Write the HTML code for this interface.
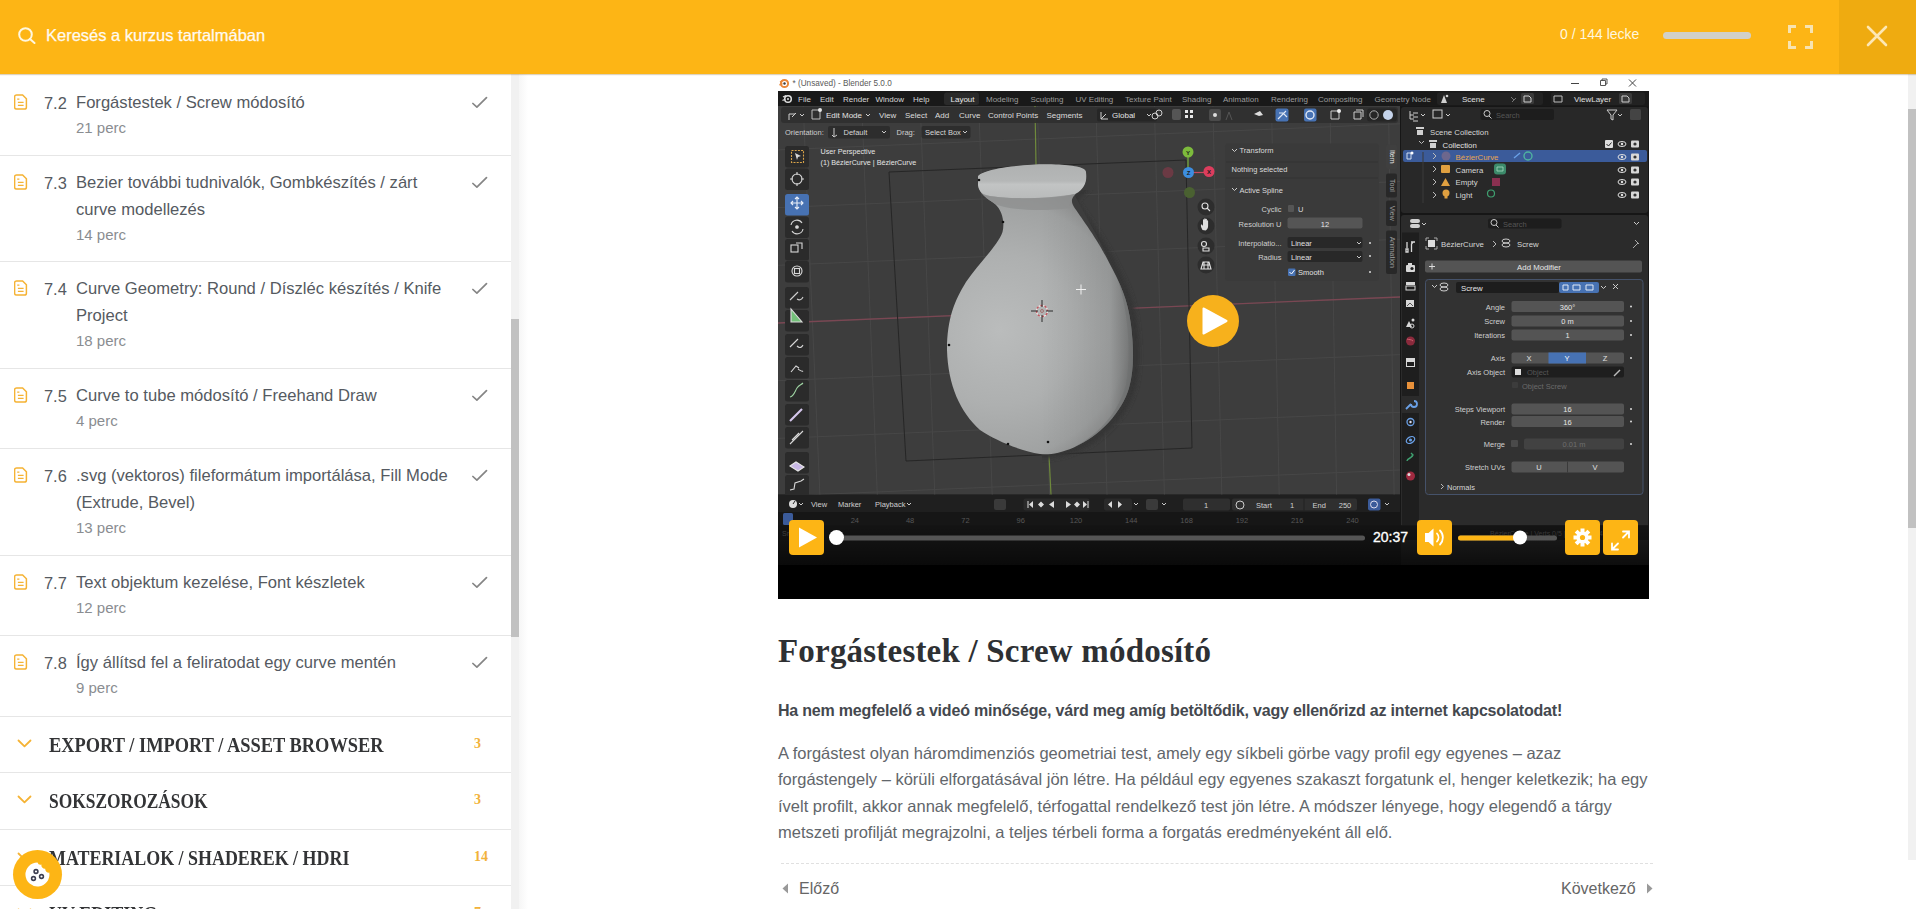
<!DOCTYPE html>
<html><head><meta charset="utf-8">
<style>
*{box-sizing:border-box;margin:0;padding:0}
html,body{width:1916px;height:909px;overflow:hidden;background:#fff;font-family:"Liberation Sans",sans-serif}
#top{position:absolute;z-index:10;left:0;top:0;width:1916px;height:74px;background:#fdb515;box-shadow:0 1px 1px rgba(120,80,0,0.25)}
#top .q{position:absolute;left:46px;top:26px;font-size:16.5px;color:#fffaf0;-webkit-text-stroke:0.25px #fffaf0}
#top .cnt{position:absolute;left:1560px;top:26px;font-size:14px;color:#fff7df}
#top .bar{position:absolute;left:1663px;top:32px;width:88px;height:7px;border-radius:4px;background:#d2d0c8}
#top .close{position:absolute;left:1839px;top:0;width:77px;height:74px;background:#efab10}
#side{position:absolute;left:0;top:0;width:511px;height:909px;background:#fff}
#sbar{position:absolute;left:511px;top:74px;width:8px;height:835px;background:#f1f1f1}
#sthumb{position:absolute;left:511px;top:319px;width:8px;height:318px;background:#c1c1c1}
#pbar{position:absolute;left:1908px;top:74px;width:8px;height:786px;background:#f1f1f1}
#pthumb{position:absolute;left:1908px;top:109px;width:8px;height:419px;background:#c1c1c1}
.item{position:absolute;left:0;width:511px;border-bottom:1px solid #e6e6e6}
.item .ic{position:absolute;left:14px;top:18px}
.item .num{position:absolute;left:44px;top:14px;font-size:16.4px;line-height:26.5px;color:#555a61}
.item .tt{position:absolute;left:76px;top:14px;width:400px;font-size:16.6px;line-height:26.5px;color:#555a61}
.item .dur{position:absolute;left:76px;font-size:15px;color:#8a8d91}
.item .ck{position:absolute;left:471px;top:20px}
.sec{position:absolute;left:0;width:511px;border-bottom:1px solid #e6e6e6}
.sec .ch{position:absolute;left:17px;top:22px}
.sec .st{position:absolute;left:49px;top:17px;font-family:"Liberation Serif",serif;font-weight:bold;font-size:20px;color:#333436;transform:scaleX(0.968);transform-origin:0 0;white-space:nowrap}
.sec .n{position:absolute;left:474px;top:19px;font-family:"Liberation Serif",serif;font-weight:bold;font-size:14px;color:#f2b23a}
#main h1{position:absolute;left:778px;top:633px;font-family:"Liberation Serif",serif;font-weight:bold;font-size:33px;letter-spacing:0.2px;color:#2e3033;white-space:nowrap}
#main .b{position:absolute;left:778px;top:701.5px;font-size:16px;font-weight:bold;letter-spacing:-0.2px;color:#44484e;white-space:nowrap}
#main .p{position:absolute;left:778px;top:740px;width:880px;font-size:16.5px;line-height:26.4px;color:#62666b}
#main .sep{position:absolute;left:781px;top:863px;width:872px;border-top:1px dashed #e0e0e0}
#main .prev{position:absolute;left:799px;top:880px;font-size:16px;color:#666}
#main .next{position:absolute;left:1561px;top:880px;font-size:16px;color:#666}
#video{position:absolute;left:778px;top:74px;width:871px;height:525px;background:#000;overflow:hidden}
#cookie{position:absolute;left:13px;top:850px;width:49px;height:49px;border-radius:50%;background:#fdb515}
</style></head><body>
<div id="top">
  <svg style="position:absolute;left:18px;top:27px" width="18" height="17" viewBox="0 0 18 17"><circle cx="7.5" cy="7.5" r="6.3" fill="none" stroke="#fff7df" stroke-width="2"/><line x1="12" y1="12" x2="16.5" y2="16" stroke="#fff7df" stroke-width="2" stroke-linecap="round"/></svg>
  <div class="q">Keresés a kurzus tartalmában</div>
  <div class="cnt">0 / 144 lecke</div>
  <div class="bar"></div>
  <svg style="position:absolute;left:1788px;top:25px" width="25" height="24" viewBox="0 0 25 24" fill="none" stroke="#f7e3b0" stroke-width="3"><path d="M1.5 8V1.5H8M17 1.5H23.5V8M23.5 16V22.5H17M8 22.5H1.5V16"/></svg>
  <div class="close"><svg style="position:absolute;left:27px;top:25px" width="22" height="22" viewBox="0 0 22 22" stroke="#fde7b4" stroke-width="2.6" stroke-linecap="round"><path d="M2 2L20 20M20 2L2 20"/></svg></div>
</div>
<div id="side">
<div class="item" style="top:76px;height:80px"><svg class="ic" width="14" height="16" viewBox="0 0 14 16" fill="none" stroke="#f5b335" stroke-width="1.5"><path d="M2.5 0.9H8.6L12.4 4.7V13.2A1.9 1.9 0 0 1 10.5 15.1H2.5A1.9 1.9 0 0 1 0.6 13.2V2.8A1.9 1.9 0 0 1 2.5 0.9Z"/><path d="M3.2 5.2H5.4M3.9 8.3H9.6M3.9 11.3H9.6" stroke-width="1.3"/></svg><div class="num">7.2</div><div class="tt">Forgástestek / Screw módosító</div><div class="dur" style="top:43.0px">21 perc</div><svg class="ck" width="18" height="14" viewBox="0 0 18 14" fill="none" stroke="#858585" stroke-width="1.7" stroke-linecap="round" stroke-linejoin="round"><path d="M1.9 7.5L5.9 11.2L15.5 1.6"/></svg></div>
<div class="item" style="top:156px;height:106px"><svg class="ic" width="14" height="16" viewBox="0 0 14 16" fill="none" stroke="#f5b335" stroke-width="1.5"><path d="M2.5 0.9H8.6L12.4 4.7V13.2A1.9 1.9 0 0 1 10.5 15.1H2.5A1.9 1.9 0 0 1 0.6 13.2V2.8A1.9 1.9 0 0 1 2.5 0.9Z"/><path d="M3.2 5.2H5.4M3.9 8.3H9.6M3.9 11.3H9.6" stroke-width="1.3"/></svg><div class="num">7.3</div><div class="tt">Bezier további tudnivalók, Gombkészítés / zárt<br>curve modellezés</div><div class="dur" style="top:69.5px">14 perc</div><svg class="ck" width="18" height="14" viewBox="0 0 18 14" fill="none" stroke="#858585" stroke-width="1.7" stroke-linecap="round" stroke-linejoin="round"><path d="M1.9 7.5L5.9 11.2L15.5 1.6"/></svg></div>
<div class="item" style="top:262px;height:107px"><svg class="ic" width="14" height="16" viewBox="0 0 14 16" fill="none" stroke="#f5b335" stroke-width="1.5"><path d="M2.5 0.9H8.6L12.4 4.7V13.2A1.9 1.9 0 0 1 10.5 15.1H2.5A1.9 1.9 0 0 1 0.6 13.2V2.8A1.9 1.9 0 0 1 2.5 0.9Z"/><path d="M3.2 5.2H5.4M3.9 8.3H9.6M3.9 11.3H9.6" stroke-width="1.3"/></svg><div class="num">7.4</div><div class="tt">Curve Geometry: Round / Díszléc készítés / Knife<br>Project</div><div class="dur" style="top:69.5px">18 perc</div><svg class="ck" width="18" height="14" viewBox="0 0 18 14" fill="none" stroke="#858585" stroke-width="1.7" stroke-linecap="round" stroke-linejoin="round"><path d="M1.9 7.5L5.9 11.2L15.5 1.6"/></svg></div>
<div class="item" style="top:369px;height:80px"><svg class="ic" width="14" height="16" viewBox="0 0 14 16" fill="none" stroke="#f5b335" stroke-width="1.5"><path d="M2.5 0.9H8.6L12.4 4.7V13.2A1.9 1.9 0 0 1 10.5 15.1H2.5A1.9 1.9 0 0 1 0.6 13.2V2.8A1.9 1.9 0 0 1 2.5 0.9Z"/><path d="M3.2 5.2H5.4M3.9 8.3H9.6M3.9 11.3H9.6" stroke-width="1.3"/></svg><div class="num">7.5</div><div class="tt">Curve to tube módosító / Freehand Draw</div><div class="dur" style="top:43.0px">4 perc</div><svg class="ck" width="18" height="14" viewBox="0 0 18 14" fill="none" stroke="#858585" stroke-width="1.7" stroke-linecap="round" stroke-linejoin="round"><path d="M1.9 7.5L5.9 11.2L15.5 1.6"/></svg></div>
<div class="item" style="top:449px;height:107px"><svg class="ic" width="14" height="16" viewBox="0 0 14 16" fill="none" stroke="#f5b335" stroke-width="1.5"><path d="M2.5 0.9H8.6L12.4 4.7V13.2A1.9 1.9 0 0 1 10.5 15.1H2.5A1.9 1.9 0 0 1 0.6 13.2V2.8A1.9 1.9 0 0 1 2.5 0.9Z"/><path d="M3.2 5.2H5.4M3.9 8.3H9.6M3.9 11.3H9.6" stroke-width="1.3"/></svg><div class="num">7.6</div><div class="tt">.svg (vektoros) fileformátum importálása, Fill Mode<br>(Extrude, Bevel)</div><div class="dur" style="top:69.5px">13 perc</div><svg class="ck" width="18" height="14" viewBox="0 0 18 14" fill="none" stroke="#858585" stroke-width="1.7" stroke-linecap="round" stroke-linejoin="round"><path d="M1.9 7.5L5.9 11.2L15.5 1.6"/></svg></div>
<div class="item" style="top:556px;height:80px"><svg class="ic" width="14" height="16" viewBox="0 0 14 16" fill="none" stroke="#f5b335" stroke-width="1.5"><path d="M2.5 0.9H8.6L12.4 4.7V13.2A1.9 1.9 0 0 1 10.5 15.1H2.5A1.9 1.9 0 0 1 0.6 13.2V2.8A1.9 1.9 0 0 1 2.5 0.9Z"/><path d="M3.2 5.2H5.4M3.9 8.3H9.6M3.9 11.3H9.6" stroke-width="1.3"/></svg><div class="num">7.7</div><div class="tt">Text objektum kezelése, Font készletek</div><div class="dur" style="top:43.0px">12 perc</div><svg class="ck" width="18" height="14" viewBox="0 0 18 14" fill="none" stroke="#858585" stroke-width="1.7" stroke-linecap="round" stroke-linejoin="round"><path d="M1.9 7.5L5.9 11.2L15.5 1.6"/></svg></div>
<div class="item" style="top:636px;height:81px"><svg class="ic" width="14" height="16" viewBox="0 0 14 16" fill="none" stroke="#f5b335" stroke-width="1.5"><path d="M2.5 0.9H8.6L12.4 4.7V13.2A1.9 1.9 0 0 1 10.5 15.1H2.5A1.9 1.9 0 0 1 0.6 13.2V2.8A1.9 1.9 0 0 1 2.5 0.9Z"/><path d="M3.2 5.2H5.4M3.9 8.3H9.6M3.9 11.3H9.6" stroke-width="1.3"/></svg><div class="num">7.8</div><div class="tt">Így állítsd fel a feliratodat egy curve mentén</div><div class="dur" style="top:43.0px">9 perc</div><svg class="ck" width="18" height="14" viewBox="0 0 18 14" fill="none" stroke="#858585" stroke-width="1.7" stroke-linecap="round" stroke-linejoin="round"><path d="M1.9 7.5L5.9 11.2L15.5 1.6"/></svg></div>
<div class="sec" style="top:717px;height:56px"><svg class="ch" width="15" height="9" viewBox="0 0 15 9" fill="none" stroke="#f5b335" stroke-width="1.8" stroke-linecap="round" stroke-linejoin="round"><path d="M1.5 1.5L7.5 7.3L13.5 1.5"/></svg><div class="st" style="transform:scaleX(0.92)">EXPORT / IMPORT / ASSET BROWSER</div><div class="n">3</div></div>
<div class="sec" style="top:773px;height:57px"><svg class="ch" width="15" height="9" viewBox="0 0 15 9" fill="none" stroke="#f5b335" stroke-width="1.8" stroke-linecap="round" stroke-linejoin="round"><path d="M1.5 1.5L7.5 7.3L13.5 1.5"/></svg><div class="st" style="transform:scaleX(0.87)">SOKSZOROZÁSOK</div><div class="n">3</div></div>
<div class="sec" style="top:830px;height:56px"><svg class="ch" width="15" height="9" viewBox="0 0 15 9" fill="none" stroke="#f5b335" stroke-width="1.8" stroke-linecap="round" stroke-linejoin="round"><path d="M1.5 1.5L7.5 7.3L13.5 1.5"/></svg><div class="st" style="transform:scaleX(0.896)">MATERIALOK / SHADEREK / HDRI</div><div class="n">14</div></div>
<div class="sec" style="top:886px;height:57px"><svg class="ch" width="15" height="9" viewBox="0 0 15 9" fill="none" stroke="#f5b335" stroke-width="1.8" stroke-linecap="round" stroke-linejoin="round"><path d="M1.5 1.5L7.5 7.3L13.5 1.5"/></svg><div class="st" style="transform:scaleX(0.9)">UV EDITING</div><div class="n">7</div></div>
</div><!--side-->
<div id="sbar"></div><div style="position:absolute;left:519px;top:74px;width:9px;height:835px;background:linear-gradient(to right,#f6f6f6,#fff)"></div><div id="sthumb"></div>
<div id="pbar"></div><div id="pthumb"></div>
<div id="main">
  <div id="video"><svg width="871" height="525" viewBox="778 74 871 525" style="position:absolute;left:0;top:0;font-family:'Liberation Sans',sans-serif"><rect x="778" y="74" width="871" height="17" rx="0" fill="#ffffff" />
<g transform="translate(784.5,83.5)"><circle r="3.6" fill="none" stroke="#e8873a" stroke-width="2"/><circle r="1.2" fill="#3a3a3a"/><path d="M-4.5 -1.5L-1 -3.5M-5 1.5L-2 0" stroke="#e8873a" stroke-width="1.4"/></g>
<text x="792.5" y="86" font-size="8.2" fill="#5a5a5a" text-anchor="start" font-weight="normal" >* (Unsaved) - Blender 5.0.0</text>
<path d="M1571 83.5H1579" stroke="#444" stroke-width="1"/>
<path d="M1600.5 80.5h5v5h-5zM1602 80.5v-1.5h5v5h-1.5" fill="none" stroke="#444" stroke-width="0.9"/>
<path d="M1629 79.5L1636 86.5M1636 79.5L1629 86.5" stroke="#444" stroke-width="1"/>
<rect x="778" y="91" width="871" height="474" rx="0" fill="#161616" />
<rect x="778" y="91" width="871" height="15" rx="0" fill="#191919" />
<g transform="translate(788,99)"><circle r="3.3" fill="none" stroke="#e0e0e0" stroke-width="1.5"/><circle r="1" fill="#e0e0e0"/><path d="M-5 -2L-2 -3.5M-5.5 1.5L-2.5 0" stroke="#e0e0e0" stroke-width="1.3"/></g>
<text x="798" y="102" font-size="8" fill="#d6d6d6" text-anchor="start" font-weight="normal" >File</text>
<text x="820" y="102" font-size="8" fill="#d6d6d6" text-anchor="start" font-weight="normal" >Edit</text>
<text x="843" y="102" font-size="8" fill="#d6d6d6" text-anchor="start" font-weight="normal" >Render</text>
<text x="875.5" y="102" font-size="8" fill="#d6d6d6" text-anchor="start" font-weight="normal" >Window</text>
<text x="913" y="102" font-size="8" fill="#d6d6d6" text-anchor="start" font-weight="normal" >Help</text>
<rect x="944" y="92.5" width="35" height="12.5" rx="2.5" fill="#2a2a2a" />
<text x="950.5" y="102" font-size="8" fill="#e8e8e8" text-anchor="start" font-weight="normal" >Layout</text>
<text x="986" y="102" font-size="8" fill="#9c9c9c" text-anchor="start" font-weight="normal" >Modeling</text>
<text x="1030.5" y="102" font-size="8" fill="#9c9c9c" text-anchor="start" font-weight="normal" >Sculpting</text>
<text x="1075.5" y="102" font-size="8" fill="#9c9c9c" text-anchor="start" font-weight="normal" >UV Editing</text>
<text x="1125" y="102" font-size="8" fill="#9c9c9c" text-anchor="start" font-weight="normal" >Texture Paint</text>
<text x="1182" y="102" font-size="8" fill="#9c9c9c" text-anchor="start" font-weight="normal" >Shading</text>
<text x="1223" y="102" font-size="8" fill="#9c9c9c" text-anchor="start" font-weight="normal" >Animation</text>
<text x="1271" y="102" font-size="8" fill="#9c9c9c" text-anchor="start" font-weight="normal" >Rendering</text>
<text x="1318" y="102" font-size="8" fill="#9c9c9c" text-anchor="start" font-weight="normal" >Compositing</text>
<text x="1374.5" y="102" font-size="8" fill="#9c9c9c" text-anchor="start" font-weight="normal" >Geometry Node</text>
<rect x="1437" y="92.5" width="106" height="12.5" rx="2" fill="#222222" />
<g fill="#cfcfcf"><path d="M1441 103l3-8 3 8z"/><circle cx="1447" cy="96" r="1.3"/></g>
<text x="1462" y="102" font-size="8" fill="#e0e0e0" text-anchor="start" font-weight="normal" >Scene</text>
<path d="M1511 97l3 3M1512 102l4-4" stroke="#777" stroke-width="1"/>
<rect x="1521" y="93" width="13" height="11" rx="1.5" fill="#3a3a3a" />
<path d="M1524 96h5l2 2v4h-7z" fill="none" stroke="#ccc" stroke-width="1"/>
<rect x="1551" y="92.5" width="94" height="12.5" rx="2" fill="#222222" />
<path d="M1554 96h8v6h-8z" fill="none" stroke="#bbb" stroke-width="1"/>
<text x="1574" y="102" font-size="8" fill="#e0e0e0" text-anchor="start" font-weight="normal" >ViewLayer</text>
<rect x="1619" y="93" width="13" height="11" rx="1.5" fill="#3a3a3a" />
<path d="M1622 96h5l2 2v4h-7z" fill="none" stroke="#ccc" stroke-width="1"/>
<clipPath id="vpclip"><rect x="778" y="106" width="622" height="388.5"/></clipPath>
<g clip-path="url(#vpclip)">
<rect x="778" y="106" width="622" height="389" rx="0" fill="#3d3d3d" />
<g stroke="#474747" stroke-width="1" fill="none"><path d="M778 92.2 L1400 66.1" /><path d="M778 149.9 L1400 123.8" /><path d="M778 207.6 L1400 181.5" /><path d="M778 265.3 L1400 239.2" /><path d="M778 323.0 L1400 296.9" /><path d="M778 380.7 L1400 354.6" /><path d="M778 438.4 L1400 412.3" /><path d="M778 496.1 L1400 470.0" /><path d="M744.7 106 L762.5 495" /><path d="M803.2 106 L819.9 495" /><path d="M861.8 106 L877.3 495" /><path d="M920.3 106 L934.8 495" /><path d="M978.8 106 L992.2 495" /><path d="M1037.3 106 L1049.6 495" /><path d="M1095.9 106 L1107.0 495" /><path d="M1154.4 106 L1164.4 495" /><path d="M1212.9 106 L1221.8 495" /><path d="M1271.5 106 L1279.2 495" /><path d="M1330.0 106 L1336.6 495" /><path d="M1388.5 106 L1394.1 495" /></g>
<path d="M778 323 L1400 297" stroke="#7a4753" stroke-width="1.3"/>
<path d="M1035 106 L1036 165" stroke="#6f8a3c" stroke-width="1.2"/>
<path d="M1049 455 L1051 495" stroke="#6f8a3c" stroke-width="1.2"/>
<path d="M889 172 L1186 160 L1192 448 L906 461 Z" fill="none" stroke="#262626" stroke-width="1"/>
<defs>
<radialGradient id="vg" cx="1000" cy="330" r="150" gradientUnits="userSpaceOnUse">
<stop offset="0" stop-color="#babcbc"/><stop offset="0.5" stop-color="#aeb0b0"/><stop offset="0.85" stop-color="#a0a2a2"/><stop offset="1" stop-color="#8d8e8e"/></radialGradient>
<linearGradient id="vdark" x1="1040" y1="0" x2="1140" y2="0" gradientUnits="userSpaceOnUse"><stop offset="0" stop-color="#000" stop-opacity="0"/><stop offset="0.7" stop-color="#000" stop-opacity="0.08"/><stop offset="1" stop-color="#000" stop-opacity="0.35"/></linearGradient>
<linearGradient id="lipg" x1="0" y1="164" x2="0" y2="198" gradientUnits="userSpaceOnUse"><stop offset="0" stop-color="#afb1b1"/><stop offset="0.5" stop-color="#b5b7b7"/><stop offset="0.6" stop-color="#c2c4c4"/><stop offset="1" stop-color="#b9bbbb"/></linearGradient>
<clipPath id="vclip"><path d="M978 176 C985 168 1030 163 1056 164.5 C1072 165 1086 167 1086 172 C1087 180 1086 188 1075.5 194 C1071 198 1071 202 1074 207 C1080 216 1098 240 1109 262.6 C1120 283 1128 300 1131 325 C1134 350 1134 370 1129 388 C1122 412 1100 436 1073.8 447.4 C1060 453 1050 455 1040 454 C1020 451 995 440 980 430 C960 412 948 385 947 350 C947 318 955 300 966 282 C980 262 998 245 1002.5 232 C1005 222 1002 210 995 204 C988 199 979 194 978 185 Z"/></clipPath>
</defs>
<filter id="vblur" x="-20%" y="-20%" width="140%" height="140%"><feGaussianBlur stdDeviation="2"/></filter>
<clipPath id="rclip"><path d="M1070 190 L1160 190 L1160 470 L1040 470 L1040 455 C1090 440 1120 400 1125 330 C1120 270 1090 230 1070 190Z"/></clipPath>
<path d="M978 176 C985 168 1030 163 1056 164.5 C1072 165 1086 167 1086 172 C1087 180 1086 188 1075.5 194 C1071 198 1071 202 1074 207 C1080 216 1098 240 1109 262.6 C1120 283 1128 300 1131 325 C1134 350 1134 370 1129 388 C1122 412 1100 436 1073.8 447.4 C1060 453 1050 455 1040 454 C1020 451 995 440 980 430 C960 412 948 385 947 350 C947 318 955 300 966 282 C980 262 998 245 1002.5 232 C1005 222 1002 210 995 204 C988 199 979 194 978 185 Z" transform="translate(2,0)" fill="none" stroke="#363636" stroke-width="9" clip-path="url(#rclip)" filter="url(#vblur)"/>
<path d="M978 176 C985 168 1030 163 1056 164.5 C1072 165 1086 167 1086 172 C1087 180 1086 188 1075.5 194 C1071 198 1071 202 1074 207 C1080 216 1098 240 1109 262.6 C1120 283 1128 300 1131 325 C1134 350 1134 370 1129 388 C1122 412 1100 436 1073.8 447.4 C1060 453 1050 455 1040 454 C1020 451 995 440 980 430 C960 412 948 385 947 350 C947 318 955 300 966 282 C980 262 998 245 1002.5 232 C1005 222 1002 210 995 204 C988 199 979 194 978 185 Z" fill="url(#vg)"/>
<g clip-path="url(#vclip)"><rect x="940" y="160" width="210" height="300" fill="url(#vdark)"/>
<path d="M1112 265 C1128 300 1132 350 1126 385 C1116 420 1090 442 1058 455 L1150 460 L1150 265Z" fill="#6d6e6e" opacity="0.45"/>
<path d="M978 176 C985 168 1030 163 1056 164.5 C1072 165 1086 167 1086 172 C1087 180 1086 188 1075 194 C1060 198 1030 199 1010 198 C995 197 982 196 979 190 C977 186 977 180 978 176 Z" fill="url(#lipg)"/>
<path d="M980 194 C995 199 1040 200 1076 194 C1072 200 1068 203 1070 208 C1040 212 1010 210 994 204 Z" fill="#8e9090" opacity="0.8"/>
</g>
<circle cx="979" cy="180" r="1.3" fill="#111"/>
<circle cx="1003" cy="222" r="1.3" fill="#111"/>
<circle cx="949" cy="345" r="1.3" fill="#111"/>
<circle cx="1008" cy="444" r="1.3" fill="#111"/>
<circle cx="1048" cy="442" r="1.3" fill="#111"/>
<g transform="translate(1042,311)"><circle r="5.5" fill="none" stroke="#f0e6e6" stroke-width="1.3" stroke-dasharray="2.2 2.1"/><circle r="5.5" fill="none" stroke="#c8505a" stroke-width="1.3" stroke-dasharray="2.2 2.1" stroke-dashoffset="2.15"/><path d="M-11 0H-4M4 0H11M0 -11V-4M0 4V11" stroke="#2a2a2a" stroke-width="1"/><circle r="1.5" fill="none" stroke="#a06060" stroke-width="0.8"/></g>
<path d="M1076 289.5H1086M1081 284.5V294.5" stroke="#f0f0f0" stroke-width="1"/>
</g>
<text x="820.5" y="153.5" font-size="7.2" fill="#e6e6e6" text-anchor="start" font-weight="normal" >User Perspective</text>
<text x="820.5" y="165" font-size="7.2" fill="#e6e6e6" text-anchor="start" font-weight="normal" >(1) BézierCurve | BézierCurve</text>
<rect x="781" y="107" width="617" height="16" rx="3" fill="#2f2f2f" opacity="0.92"/>
<g stroke="#cfcfcf" stroke-width="1" fill="none"><path d="M789 120v-6h6M792 117l4-4"/><path d="M800 114l2 2 2-2"/></g>
<path d="M812 110h8v9h-8z" fill="none" stroke="#bcbcbc" stroke-width="1"/><circle cx="820" cy="110" r="2" fill="#e6e6e6"/>
<text x="826" y="118" font-size="8" fill="#e3e3e3" text-anchor="start" font-weight="normal" >Edit Mode</text>
<path d="M866 114l2 2 2-2" stroke="#cfcfcf" fill="none"/>
<text x="879" y="118" font-size="8" fill="#dcdcdc" text-anchor="start" font-weight="normal" >View</text>
<text x="905" y="118" font-size="8" fill="#dcdcdc" text-anchor="start" font-weight="normal" >Select</text>
<text x="935" y="118" font-size="8" fill="#dcdcdc" text-anchor="start" font-weight="normal" >Add</text>
<text x="959" y="118" font-size="8" fill="#dcdcdc" text-anchor="start" font-weight="normal" >Curve</text>
<text x="988" y="118" font-size="8" fill="#dcdcdc" text-anchor="start" font-weight="normal" >Control Points</text>
<text x="1046.5" y="118" font-size="8" fill="#dcdcdc" text-anchor="start" font-weight="normal" >Segments</text>
<rect x="1097" y="108.5" width="60" height="13" rx="2" fill="#262626" />
<path d="M1101 112v7h7M1101 119l5-5" stroke="#cfcfcf" fill="none" stroke-width="1"/>
<text x="1112" y="118" font-size="8" fill="#e3e3e3" text-anchor="start" font-weight="normal" >Global</text>
<path d="M1147 114l2 2 2-2" stroke="#cfcfcf" fill="none"/>
<g stroke="#cfcfcf" fill="none" stroke-width="1"><circle cx="1155" cy="116" r="3"/><circle cx="1159" cy="113" r="3"/></g>
<rect x="1172" y="109" width="9" height="11" rx="2" fill="#555" />
<g fill="#e8e8e8"><rect x="1185" y="110" width="3" height="3"/><rect x="1190" y="110" width="3" height="3"/><rect x="1185" y="115" width="3" height="3"/><rect x="1190" y="115" width="3" height="3"/></g>
<rect x="1209" y="109" width="12" height="12" rx="2" fill="#4a4a4a" />
<circle cx="1215" cy="115" r="2" fill="#ddd"/>
<path d="M1226 120l3-8 3 8" stroke="#555" fill="none"/>
<g fill="#ddd"><path d="M1254 114l6-3 3 4-4 1z"/></g>
<rect x="1275.5" y="108.5" width="13" height="13" rx="2" fill="#4772b3" />
<path d="M1278 119l8-8M1279 113h4l4 4" stroke="#e0e8f5" fill="none" stroke-width="1.1"/>
<rect x="1304" y="108.5" width="12.5" height="13" rx="2" fill="#4772b3" />
<circle cx="1310" cy="115" r="4" fill="none" stroke="#dfe8f6" stroke-width="1.4"/>
<path d="M1331 111h8v8h-8z" fill="none" stroke="#ccc"/><circle cx="1339" cy="111" r="2" fill="#eee"/>
<path d="M1354 112h7v7h-7zM1356 110h7v7" fill="none" stroke="#ccc"/>
<rect x="1367" y="108.5" width="30" height="13" rx="3" fill="#262626" />
<circle cx="1374" cy="115" r="4.2" fill="none" stroke="#aaa"/><circle cx="1388" cy="115" r="5" fill="#c5d3ea"/>
<text x="785" y="135" font-size="7.5" fill="#cfcfcf" text-anchor="start" font-weight="normal" >Orientation:</text>
<rect x="828" y="126" width="62" height="12.5" rx="2" fill="#2b2b2b" opacity="0.9"/>
<path d="M834 128v8M832 135l2 2 3-2" stroke="#ccc" fill="none" stroke-width="1"/>
<text x="843.5" y="135" font-size="7.5" fill="#d6d6d6" text-anchor="start" font-weight="normal" >Default</text>
<path d="M882 131l2 2 2-2" stroke="#ccc" fill="none"/>
<text x="896.5" y="135" font-size="7.5" fill="#cfcfcf" text-anchor="start" font-weight="normal" >Drag:</text>
<rect x="921.5" y="126" width="49" height="12.5" rx="2" fill="#2b2b2b" opacity="0.9"/>
<text x="925" y="135" font-size="7.5" fill="#d6d6d6" text-anchor="start" font-weight="normal" >Select Box</text>
<path d="M963 131l2 2 2-2" stroke="#ccc" fill="none"/>
<rect x="785" y="146" width="24" height="21.5" rx="2.5" fill="#2b2b2b" />
<rect x="785" y="168.5" width="24" height="21.5" rx="2.5" fill="#2b2b2b" />
<rect x="785" y="194" width="24" height="21.5" rx="2.5" fill="#4772b3" />
<rect x="785" y="216.5" width="24" height="21.5" rx="2.5" fill="#2b2b2b" />
<rect x="785" y="239" width="24" height="21.5" rx="2.5" fill="#2b2b2b" />
<rect x="785" y="261" width="24" height="21.5" rx="2.5" fill="#2b2b2b" />
<rect x="785" y="287" width="24" height="21.5" rx="2.5" fill="#2b2b2b" />
<rect x="785" y="310" width="24" height="21.5" rx="2.5" fill="#2b2b2b" />
<rect x="785" y="334" width="24" height="21.5" rx="2.5" fill="#2b2b2b" />
<rect x="785" y="357" width="24" height="21.5" rx="2.5" fill="#2b2b2b" />
<rect x="785" y="380" width="24" height="21.5" rx="2.5" fill="#2b2b2b" />
<rect x="785" y="404" width="24" height="21.5" rx="2.5" fill="#2b2b2b" />
<rect x="785" y="427" width="24" height="21.5" rx="2.5" fill="#2b2b2b" />
<rect x="785" y="452" width="24" height="21.5" rx="2.5" fill="#2b2b2b" />
<rect x="785" y="475" width="24" height="21.5" rx="2.5" fill="#2b2b2b" />
<g stroke="#d8d8d8" fill="none" stroke-width="1.1">
<rect x="791.5" y="150.5" width="12" height="12" stroke-dasharray="2 1.2" stroke="#d9a44a"/><path d="M795 153l6 3-3 1-1 3z" fill="#d8d8d8" stroke="none"/>
<circle cx="797" cy="179" r="5"/><path d="M797 172v3M797 183v3M790 179h3M801 179h3"/>
<path d="M797 197v12M791 203h12M795 199l2-2 2 2M795 207l2 2 2-2M793 201l-2 2 2 2M801 201l2 2-2 2" stroke="#e8eef8"/>
<path d="M791 225a6 6 0 0 1 11-2M803 229a6 6 0 0 1-11 2"/><circle cx="797" cy="227" r="1.3" fill="#d8d8d8"/>
<rect x="791" y="245" width="7" height="7"/><path d="M796 243h6v6"/>
<circle cx="797" cy="271" r="5"/><rect x="794.5" y="268.5" width="5" height="5"/>
<path d="M790 300l8-8M797 299c3 2 5 0 6-2" stroke="#cfcfcf"/>
<path d="M791 309v13h11z" fill="#74c17a" stroke="#dcdcdc"/>
<path d="M790 347l8-8M797 346c3 3 5 1 6-1" />
<path d="M791 372l5-6 3 2M798 369c3 2 4 3 5 2"/>
<path d="M790 397c4-1 5-6 7-9s4-3 6-5" stroke="#9fd4a3"/>
<path d="M790 421l12-12" stroke-width="2.2" stroke="#d5c7ec"/>
<path d="M790 444l13-13M792 440l7-7" />
<path d="M790 466l6-4 8 5-6 4z" fill="#c8b8e6" stroke="#e6e6e6"/>
<path d="M790 490l4-1 1-6 6-2 3-2"/>
</g>
<rect x="1225" y="143.5" width="154" height="137.5" rx="3" fill="#3a3a3a" opacity="0.95"/>
<path d="M1226 162H1378M1226 178H1378" stroke="#333" />
<path d="M1232 149l2.5 2.5 2.5-2.5" stroke="#ccc" fill="none"/><path d="M1232 188l2.5 2.5 2.5-2.5" stroke="#ccc" fill="none"/>
<text x="1239.5" y="153" font-size="7.5" fill="#dadada" text-anchor="start" font-weight="normal" >Transform</text>
<text x="1231.5" y="172" font-size="7.5" fill="#dadada" text-anchor="start" font-weight="normal" >Nothing selected</text>
<text x="1239.5" y="193" font-size="7.5" fill="#dadada" text-anchor="start" font-weight="normal" >Active Spline</text>
<text x="1281.5" y="212" font-size="7.5" fill="#cfcfcf" text-anchor="end" font-weight="normal" >Cyclic</text>
<rect x="1288" y="205" width="6" height="7" rx="1" fill="#555" />
<text x="1298" y="212" font-size="7.5" fill="#dadada" text-anchor="start" font-weight="normal" >U</text>
<text x="1281.5" y="226.5" font-size="7.5" fill="#cfcfcf" text-anchor="end" font-weight="normal" >Resolution U</text>
<rect x="1287.5" y="217.5" width="75" height="11" rx="2" fill="#555555" />
<text x="1325" y="226.5" font-size="7.5" fill="#e6e6e6" text-anchor="middle" font-weight="normal" >12</text>
<text x="1281.5" y="245.5" font-size="7.5" fill="#cfcfcf" text-anchor="end" font-weight="normal" >Interpolatio...</text>
<rect x="1287.5" y="237" width="75" height="11" rx="2" fill="#282828" />
<text x="1291" y="245.5" font-size="7.5" fill="#e0e0e0" text-anchor="start" font-weight="normal" >Linear</text>
<text x="1281.5" y="259.5" font-size="7.5" fill="#cfcfcf" text-anchor="end" font-weight="normal" >Radius</text>
<rect x="1287.5" y="251" width="75" height="11" rx="2" fill="#282828" />
<text x="1291" y="259.5" font-size="7.5" fill="#e0e0e0" text-anchor="start" font-weight="normal" >Linear</text>
<path d="M1357 242l2 2 2-2M1357 256l2 2 2-2" stroke="#ccc" fill="none"/>
<rect x="1288" y="268.5" width="7.5" height="7.5" rx="1.2" fill="#4772b3" />
<path d="M1289.5 272l2 2 3-4" stroke="#fff" fill="none" stroke-width="1"/>
<text x="1298" y="275" font-size="7.5" fill="#e0e0e0" text-anchor="start" font-weight="normal" >Smooth</text>
<circle cx="1370" cy="243" r="1" fill="#ddd"/>
<circle cx="1370" cy="256" r="1" fill="#ddd"/>
<circle cx="1370" cy="272" r="1" fill="#ddd"/>
<rect x="1386" y="144.5" width="11" height="24.5" rx="2" fill="#3f3f3f" />
<text x="1391.5" y="156.75" font-size="7" fill="#e6e6e6" text-anchor="middle" transform="rotate(90 1391.5 156.75)" dominant-baseline="middle">Item</text>
<rect x="1386" y="173.5" width="11" height="24.0" rx="2" fill="#282828" />
<text x="1391.5" y="185.5" font-size="7" fill="#a0a0a0" text-anchor="middle" transform="rotate(90 1391.5 185.5)" dominant-baseline="middle">Tool</text>
<rect x="1386" y="200.5" width="11" height="25.5" rx="2" fill="#282828" />
<text x="1391.5" y="213.25" font-size="7" fill="#a0a0a0" text-anchor="middle" transform="rotate(90 1391.5 213.25)" dominant-baseline="middle">View</text>
<rect x="1386" y="230.5" width="11" height="43.5" rx="2" fill="#282828" />
<text x="1391.5" y="252.25" font-size="7" fill="#a0a0a0" text-anchor="middle" transform="rotate(90 1391.5 252.25)" dominant-baseline="middle">Animation</text>
<path d="M1188 152V172M1188 172.5H1209" stroke="#7ab33f" stroke-width="1.2"/><path d="M1188 172.5H1209" stroke="#c84a5f" stroke-width="1.2"/>
<circle cx="1168" cy="172.5" r="5.5" fill="#6b3a44"/><circle cx="1189.5" cy="192.5" r="5.5" fill="#4a6131"/>
<circle cx="1188" cy="152" r="5.5" fill="#7dbb3c"/><circle cx="1188.5" cy="172.5" r="5.5" fill="#3d8ee0"/><circle cx="1209" cy="171.5" r="5.5" fill="#dc3d5d"/>
<text x="1188" y="154.5" font-size="6" fill="#1a1a1a" text-anchor="middle" font-weight="bold" >Y</text>
<text x="1188.5" y="175" font-size="6" fill="#1a1a1a" text-anchor="middle" font-weight="bold" >Z</text>
<text x="1209" y="174" font-size="6" fill="#1a1a1a" text-anchor="middle" font-weight="bold" >X</text>
<circle cx="1206" cy="207" r="8.5" fill="#2d2d2d"/>
<circle cx="1206" cy="226" r="8.5" fill="#2d2d2d"/>
<circle cx="1206" cy="246" r="8.5" fill="#2d2d2d"/>
<circle cx="1206" cy="265" r="8.5" fill="#2d2d2d"/>
<g stroke="#e0e0e0" fill="none" stroke-width="1.1"><circle cx="1205" cy="206" r="3"/><path d="M1207 208l3 3"/><path d="M1202.5 230c-1-2-2-4-1.5-5s1.5 0 2 1v-6c0-1 1.3-1 1.3 0v4v-5c0-1 1.3-1 1.3 0v5v-4.5c0-1 1.3-1 1.3 0v4.5v-3c0-1 1.2-1 1.2 0v5c0 2-1 4-2.5 4.5z" fill="#e0e0e0" stroke="none"/><circle cx="1204" cy="244" r="2.5"/><path d="M1203 248h6v3h-6z"/><path d="M1201 269l2-7h6l2 7zM1202 265h8M1204 262v7M1208 262v7"/></g>
<rect x="1401" y="107" width="247" height="106" rx="3" fill="#282828" />
<g stroke="#cfcfcf" fill="none" stroke-width="1"><path d="M1410 111v8M1410 115h4M1410 119h4M1413 113h5M1413 117h5M1413 121h5"/><path d="M1421 114l2 2 2-2"/><rect x="1433" y="110" width="9" height="8"/><path d="M1446 114l2 2 2-2"/></g>
<rect x="1480.5" y="109" width="73.5" height="11" rx="2" fill="#1d1d1d" />
<circle cx="1487" cy="113.5" r="3" fill="none" stroke="#ccc"/><path d="M1489 116l2.5 2.5" stroke="#ccc"/>
<text x="1496" y="118" font-size="7.5" fill="#555" text-anchor="start" font-weight="normal" >Search</text>
<path d="M1607 110h10l-4 5v5l-2-1v-4z" fill="none" stroke="#ccc" stroke-width="1"/><path d="M1618 114l2 2 2-2" stroke="#ccc" fill="none"/>
<rect x="1630" y="109" width="11" height="11" rx="1.5" fill="#444" />
<path d="M1416 127h8v2h-8zM1417 130h6v5h-6z" fill="#d0d0d0"/>
<text x="1430" y="134.5" font-size="7.8" fill="#d6d6d6" text-anchor="start" font-weight="normal" >Scene Collection</text>
<path d="M1419 141l2.5 2.5 2.5-2.5" stroke="#bbb" fill="none"/>
<path d="M1429 140h8v2h-8zM1430 143h6v5h-6z" fill="#d0d0d0"/>
<text x="1442.5" y="147.5" font-size="7.8" fill="#e0e0e0" text-anchor="start" font-weight="normal" >Collection</text>
<rect x="1403" y="150" width="244" height="12" rx="2" fill="#3b5b9a" />
<path d="M1407 153h4v6h-4z" fill="none" stroke="#cfdcf0"/><circle cx="1412" cy="153" r="1.5" fill="#fff"/>
<path d="M1433 153l3 3-3 3" stroke="#bbb" fill="none"/>
<path d="M1433 166l3 3-3 3" stroke="#bbb" fill="none"/>
<path d="M1433 179l3 3-3 3" stroke="#bbb" fill="none"/>
<path d="M1433 192l3 3-3 3" stroke="#bbb" fill="none"/>
<circle cx="1446" cy="156" r="4.5" fill="#7a6a8a" opacity="0.8"/>
<text x="1455.5" y="159.5" font-size="7.8" fill="#e8a552" text-anchor="start" font-weight="normal" >BézierCurve</text>
<path d="M1514 158l6-5" stroke="#6aa0e6" stroke-width="1.4"/><circle cx="1528" cy="156" r="4" fill="none" stroke="#4fb3a0" stroke-width="1.4"/>
<rect x="1441" y="165" width="9" height="8" rx="1" fill="#e0a040"/>
<text x="1455.5" y="172.5" font-size="7.8" fill="#d6d6d6" text-anchor="start" font-weight="normal" >Camera</text>
<rect x="1494" y="163.5" width="12" height="11" rx="3" fill="#3c8a6a"/><path d="M1497 167h6v4h-6z" fill="none" stroke="#9ad0b5" stroke-width="0.9"/>
<path d="M1441 186l4.5-8 4.5 8z" fill="#e0a040"/>
<text x="1455.5" y="185" font-size="7.8" fill="#d6d6d6" text-anchor="start" font-weight="normal" >Empty</text>
<rect x="1492" y="178" width="8" height="8" fill="#8a3050"/>
<circle cx="1446" cy="193" r="3.5" fill="#e0a040"/><rect x="1444.5" y="196" width="3" height="2.5" fill="#e0a040"/>
<text x="1455.5" y="198" font-size="7.8" fill="#d6d6d6" text-anchor="start" font-weight="normal" >Light</text>
<circle cx="1491" cy="193.5" r="3.5" fill="none" stroke="#3fa070" stroke-width="1.2"/>
<rect x="1605" y="140" width="8" height="8" rx="1" fill="#ddd"/><path d="M1606.5 144l2 2 3-3.5" stroke="#222" fill="none"/>
<ellipse cx="1622" cy="144" rx="4" ry="2.5" fill="none" stroke="#e0e0e0" stroke-width="1"/><circle cx="1622" cy="144" r="1.2" fill="#e0e0e0"/>
<rect x="1631" y="140.5" width="8" height="7" rx="1" fill="#d8d8d8"/><circle cx="1635" cy="144" r="1.6" fill="#333"/>
<ellipse cx="1622" cy="157" rx="4" ry="2.5" fill="none" stroke="#e0e0e0" stroke-width="1"/><circle cx="1622" cy="157" r="1.2" fill="#e0e0e0"/>
<rect x="1631" y="153.5" width="8" height="7" rx="1" fill="#d8d8d8"/><circle cx="1635" cy="157" r="1.6" fill="#333"/>
<ellipse cx="1622" cy="170" rx="4" ry="2.5" fill="none" stroke="#e0e0e0" stroke-width="1"/><circle cx="1622" cy="170" r="1.2" fill="#e0e0e0"/>
<rect x="1631" y="166.5" width="8" height="7" rx="1" fill="#d8d8d8"/><circle cx="1635" cy="170" r="1.6" fill="#333"/>
<ellipse cx="1622" cy="182" rx="4" ry="2.5" fill="none" stroke="#e0e0e0" stroke-width="1"/><circle cx="1622" cy="182" r="1.2" fill="#e0e0e0"/>
<rect x="1631" y="178.5" width="8" height="7" rx="1" fill="#d8d8d8"/><circle cx="1635" cy="182" r="1.6" fill="#333"/>
<ellipse cx="1622" cy="195" rx="4" ry="2.5" fill="none" stroke="#e0e0e0" stroke-width="1"/><circle cx="1622" cy="195" r="1.2" fill="#e0e0e0"/>
<rect x="1631" y="191.5" width="8" height="7" rx="1" fill="#d8d8d8"/><circle cx="1635" cy="195" r="1.6" fill="#333"/>
<path d="M1423 152V203" stroke="#3a3a3a"/>
<rect x="1401" y="215" width="247" height="350" rx="3" fill="#2b2b2b" />
<g fill="#d0d0d0"><rect x="1410" y="219" width="10" height="4" rx="2"/><rect x="1410" y="224" width="10" height="4" rx="2"/></g><path d="M1422 223l2 2 2-2" stroke="#ccc" fill="none"/>
<rect x="1488" y="218.5" width="73.5" height="10" rx="2" fill="#1d1d1d" />
<circle cx="1494" cy="222.5" r="3" fill="none" stroke="#ccc"/><path d="M1496 225l2.5 2.5" stroke="#ccc"/>
<text x="1503" y="226.5" font-size="7.5" fill="#555" text-anchor="start" font-weight="normal" >Search</text>
<path d="M1634 222l2.5 2.5 2.5-2.5" stroke="#ccc" fill="none"/>
<rect x="1402" y="232.5" width="17" height="332" rx="0" fill="#1e1e1e" />
<g>
<path d="M1407 242v6M1406 249h2v3h-2zM1413 242l-1.5 2v8M1411 242h4" stroke="#d8d8d8" stroke-width="1.3" fill="none"/>
<rect x="1406" y="265" width="9" height="7" rx="1" fill="#d8d8d8"/><rect x="1408" y="263" width="4" height="2" fill="#d8d8d8"/><circle cx="1412" cy="268.5" r="1.6" fill="#1e1e1e"/>
<rect x="1406" y="282" width="9" height="3" fill="#d8d8d8"/><rect x="1406" y="286" width="9" height="4" fill="none" stroke="#d8d8d8"/>
<rect x="1406" y="300" width="8" height="7" fill="#d8d8d8"/><path d="M1407 306l3-3 3 3" stroke="#555" fill="none"/>
<path d="M1406 327l3-6 3 6z" fill="#d8d8d8"/><circle cx="1413" cy="320" r="1.5" fill="#d8d8d8"/><circle cx="1412" cy="326" r="2" fill="none" stroke="#d8d8d8"/>
<circle cx="1410.5" cy="341" r="4.5" fill="#8a2a3c"/><path d="M1407 339c2 1 4 0 6 2" stroke="#d06070" fill="none"/>
<rect x="1406" y="358" width="9" height="3" fill="#d8d8d8"/><rect x="1406.5" y="361.5" width="8" height="5" fill="none" stroke="#d8d8d8"/>
<rect x="1407" y="382" width="7" height="7" fill="#e8913a"/>
<rect x="1402" y="396" width="17" height="17" fill="#2b2b2b"/>
<path d="M1406 409l5-5M1411 404a3 3 0 1 0 3-3" stroke="#6aa0e6" stroke-width="1.8" fill="none"/>
<circle cx="1410.5" cy="422" r="3.5" fill="none" stroke="#6aa0e6" stroke-width="1.3"/><circle cx="1410.5" cy="422" r="1.2" fill="#dde"/>
<ellipse cx="1410.5" cy="440" rx="4.5" ry="3" fill="none" stroke="#6aa0e6" stroke-width="1.3" transform="rotate(-30 1410.5 440)"/><circle cx="1410.5" cy="440" r="1.6" fill="#6aa0e6"/>
<path d="M1407 461c0-3 6-3 6-6M1411 453l2 2-2 2" stroke="#3fa070" stroke-width="1.4" fill="none"/>
<circle cx="1410.5" cy="476" r="4.5" fill="#a02a40"/><circle cx="1409" cy="474.5" r="1.5" fill="#e0e0e0"/>
</g>
<rect x="1428" y="240" width="7" height="7" fill="#ddd"/><path d="M1426 238h3M1426 238v3M1437 238h-3M1437 238v3M1426 249h3M1426 249v-3M1437 249h-3M1437 249v-3" stroke="#aaa" fill="none"/>
<text x="1441" y="247" font-size="7.8" fill="#d6d6d6" text-anchor="start" font-weight="normal" >BézierCurve</text>
<path d="M1493 241l3 3-3 3" stroke="#bbb" fill="none"/>
<g stroke="#ccc" fill="none"><ellipse cx="1506" cy="241" rx="4" ry="2"/><ellipse cx="1506" cy="245" rx="4" ry="2"/></g>
<text x="1517" y="247" font-size="7.8" fill="#d6d6d6" text-anchor="start" font-weight="normal" >Screw</text>
<path d="M1633 248l5-5M1635 240l4 4" stroke="#aaa" fill="none"/>
<rect x="1425" y="260.5" width="217" height="12" rx="2" fill="#545454" />
<path d="M1429 266.5h6M1432 263.5v6" stroke="#ddd"/>
<text x="1539" y="269.5" font-size="7.8" fill="#e6e6e6" text-anchor="middle" font-weight="normal" >Add Modifier</text>
<rect x="1425.5" y="279.5" width="217.5" height="215" rx="3" fill="#323232" stroke="#45526a" stroke-width="1"/>
<path d="M1432 285l2.5 2.5 2.5-2.5" stroke="#ccc" fill="none"/>
<g stroke="#ccc" fill="none"><ellipse cx="1444" cy="285" rx="4" ry="2"/><ellipse cx="1444" cy="289" rx="4" ry="2"/></g>
<rect x="1456" y="282" width="103" height="11" rx="2" fill="#1d1d1d" />
<text x="1461" y="290.5" font-size="7.8" fill="#e6e6e6" text-anchor="start" font-weight="normal" >Screw</text>
<rect x="1559" y="282" width="40" height="11" rx="2" fill="#4772b3" />
<path d="M1563 285h5v5h-5zM1573 285h7v5h-7zM1586 285h7v5h-7z" fill="none" stroke="#e0e8f5"/>
<path d="M1601 286l2.5 2.5 2.5-2.5" stroke="#ccc" fill="none"/><path d="M1613 284l5 5M1618 284l-5 5" stroke="#ccc"/>
<text x="1505" y="309.5" font-size="7.5" fill="#cfcfcf" text-anchor="end" font-weight="normal" >Angle</text>
<rect x="1511.5" y="301.0" width="112.5" height="11" rx="2" fill="#545454" />
<text x="1567.5" y="309.5" font-size="7.5" fill="#e6e6e6" text-anchor="middle" font-weight="normal" >360°</text>
<circle cx="1631" cy="306.5" r="1" fill="#ddd"/>
<text x="1505" y="324" font-size="7.5" fill="#cfcfcf" text-anchor="end" font-weight="normal" >Screw</text>
<rect x="1511.5" y="315.5" width="112.5" height="11" rx="2" fill="#545454" />
<text x="1567.5" y="324" font-size="7.5" fill="#e6e6e6" text-anchor="middle" font-weight="normal" >0 m</text>
<circle cx="1631" cy="321" r="1" fill="#ddd"/>
<text x="1505" y="338" font-size="7.5" fill="#cfcfcf" text-anchor="end" font-weight="normal" >Iterations</text>
<rect x="1511.5" y="329.5" width="112.5" height="11" rx="2" fill="#545454" />
<text x="1567.5" y="338" font-size="7.5" fill="#e6e6e6" text-anchor="middle" font-weight="normal" >1</text>
<circle cx="1631" cy="335" r="1" fill="#ddd"/>
<text x="1505" y="361" font-size="7.5" fill="#cfcfcf" text-anchor="end" font-weight="normal" >Axis</text>
<rect x="1511.5" y="352.5" width="112.5" height="11" rx="2" fill="#545454" />
<rect x="1548.5" y="352.5" width="37.5" height="11" rx="0" fill="#4772b3" />
<text x="1529" y="361" font-size="7.5" fill="#e0e0e0" text-anchor="middle" font-weight="normal" >X</text>
<text x="1567" y="361" font-size="7.5" fill="#ffffff" text-anchor="middle" font-weight="normal" >Y</text>
<text x="1605" y="361" font-size="7.5" fill="#e0e0e0" text-anchor="middle" font-weight="normal" >Z</text>
<circle cx="1631" cy="358" r="1" fill="#ddd"/>
<text x="1505" y="375" font-size="7.5" fill="#cfcfcf" text-anchor="end" font-weight="normal" >Axis Object</text>
<rect x="1511.5" y="366.5" width="112.5" height="11" rx="2" fill="#1e1e1e" />
<rect x="1515" y="369" width="6" height="6" fill="#ddd"/>
<text x="1527" y="375" font-size="7.5" fill="#555" text-anchor="start" font-weight="normal" >Object</text>
<path d="M1614 376l6-6" stroke="#bbb" stroke-width="1.4"/>
<rect x="1512" y="382" width="6" height="6" rx="1" fill="#3c3c3c"/>
<text x="1522" y="389" font-size="7.5" fill="#6a6a6a" text-anchor="start" font-weight="normal" >Object Screw</text>
<text x="1505" y="412" font-size="7.5" fill="#cfcfcf" text-anchor="end" font-weight="normal" >Steps Viewport</text>
<rect x="1511.5" y="403.5" width="112.5" height="11" rx="2" fill="#545454" />
<text x="1567.5" y="412" font-size="7.5" fill="#e6e6e6" text-anchor="middle" font-weight="normal" >16</text>
<circle cx="1631" cy="409" r="1" fill="#ddd"/>
<text x="1505" y="424.5" font-size="7.5" fill="#cfcfcf" text-anchor="end" font-weight="normal" >Render</text>
<rect x="1511.5" y="416.0" width="112.5" height="11" rx="2" fill="#545454" />
<text x="1567.5" y="424.5" font-size="7.5" fill="#e6e6e6" text-anchor="middle" font-weight="normal" >16</text>
<circle cx="1631" cy="421.5" r="1" fill="#ddd"/>
<text x="1505" y="447" font-size="7.5" fill="#cfcfcf" text-anchor="end" font-weight="normal" >Merge</text>
<rect x="1511" y="440" width="7" height="7" rx="1" fill="#4a4a4a"/>
<rect x="1524" y="438.5" width="100" height="11" rx="2" fill="#424242" />
<text x="1574" y="447" font-size="7.5" fill="#6e6e6e" text-anchor="middle" font-weight="normal" >0.01 m</text>
<circle cx="1631" cy="444" r="1" fill="#ddd"/>
<text x="1505" y="470" font-size="7.5" fill="#cfcfcf" text-anchor="end" font-weight="normal" >Stretch UVs</text>
<rect x="1511.5" y="461.5" width="112.5" height="11" rx="2" fill="#545454" />
<path d="M1567.5 461.5v11" stroke="#3a3a3a"/>
<text x="1539" y="470" font-size="7.5" fill="#e0e0e0" text-anchor="middle" font-weight="normal" >U</text>
<text x="1595" y="470" font-size="7.5" fill="#e0e0e0" text-anchor="middle" font-weight="normal" >V</text>
<path d="M1441 484l2.5 2.5-2.5 2.5" stroke="#bbb" fill="none"/>
<text x="1447" y="490" font-size="7.5" fill="#d6d6d6" text-anchor="start" font-weight="normal" >Normals</text>
<rect x="778" y="495" width="622" height="17" rx="0" fill="#1f1f1f" />
<circle cx="793" cy="504" r="4" fill="#ddd"/><path d="M793 504l2-3" stroke="#222"/><path d="M799 503l2 2 2-2" stroke="#ccc" fill="none"/>
<text x="811" y="507" font-size="7.5" fill="#cfcfcf" text-anchor="start" font-weight="normal" >View</text>
<text x="838" y="507" font-size="7.5" fill="#cfcfcf" text-anchor="start" font-weight="normal" >Marker</text>
<text x="875" y="507" font-size="7.5" fill="#cfcfcf" text-anchor="start" font-weight="normal" >Playback</text>
<path d="M907 503l2 2 2-2" stroke="#ccc" fill="none"/>
<rect x="994" y="499" width="12" height="11" rx="2" fill="#3a3a3a" />
<rect x="1023.5" y="498.5" width="66" height="12" rx="2" fill="#2a2a2a" />
<g fill="#ddd"><path d="M1028 501v7M1029 504.5l4-3.5v7z"/><path d="M1038 504.5l3-3v6zM1044 504.5l-3-3v6z"/><path d="M1054 501l-5 3.5 5 3.5z"/><path d="M1066 501l5 3.5-5 3.5z"/><path d="M1074 504.5l3-3v6zM1080 504.5l-3-3v6z"/><path d="M1088 501v7M1087 504.5l-4-3.5v7z"/></g>
<path d="M1028 501v7M1088 501v7" stroke="#ddd"/>
<rect x="1104" y="498.5" width="28" height="12" rx="2" fill="#2a2a2a" />
<g fill="#ddd"><path d="M1108 504.5l4-3.5v7zM1122 504.5l-4-3.5v7z"/></g>
<path d="M1134 503l2 2 2-2" stroke="#ccc" fill="none"/>
<rect x="1146" y="499" width="12" height="11" rx="2" fill="#3a3a3a" />
<path d="M1162 503l2 2 2-2" stroke="#ccc" fill="none"/>
<rect x="1183" y="498.5" width="47" height="12" rx="2" fill="#2f2f2f" />
<text x="1206" y="507.5" font-size="7.5" fill="#cfcfcf" text-anchor="middle" font-weight="normal" >1</text>
<circle cx="1240" cy="505" r="4" fill="none" stroke="#ccc"/><path d="M1240 502.5v2.5h2" stroke="#ccc" fill="none"/>
<rect x="1232" y="498.5" width="125" height="12" rx="2" fill="#2f2f2f" />
<circle cx="1240" cy="505" r="4" fill="none" stroke="#ccc"/>
<text x="1256" y="507.5" font-size="7.5" fill="#cfcfcf" text-anchor="start" font-weight="normal" >Start</text>
<text x="1292" y="507.5" font-size="7.5" fill="#cfcfcf" text-anchor="middle" font-weight="normal" >1</text>
<path d="M1304 498.5v12" stroke="#222"/>
<text x="1312.5" y="507.5" font-size="7.5" fill="#cfcfcf" text-anchor="start" font-weight="normal" >End</text>
<text x="1345" y="507.5" font-size="7.5" fill="#cfcfcf" text-anchor="middle" font-weight="normal" >250</text>
<rect x="1368" y="498.5" width="12.5" height="12" rx="2" fill="#3b5b9a" />
<circle cx="1374" cy="504.5" r="3.5" fill="none" stroke="#dde"/><path d="M1385 503l2 2 2-2" stroke="#ccc" fill="none"/>
<rect x="1401" y="495" width="247" height="70" rx="0" fill="#2b2b2b" />
<rect x="1402" y="495" width="17" height="70" rx="0" fill="#1e1e1e" />
<rect x="778" y="512" width="622" height="53" rx="0" fill="#161616" />
<rect x="783" y="513" width="10" height="12" rx="1.5" fill="#3b5b9a" />
<text x="854.8" y="523" font-size="7.5" fill="#575757" text-anchor="middle" font-weight="normal" >24</text>
<text x="910.1" y="523" font-size="7.5" fill="#575757" text-anchor="middle" font-weight="normal" >48</text>
<text x="965.4" y="523" font-size="7.5" fill="#575757" text-anchor="middle" font-weight="normal" >72</text>
<text x="1020.7" y="523" font-size="7.5" fill="#575757" text-anchor="middle" font-weight="normal" >96</text>
<text x="1076" y="523" font-size="7.5" fill="#575757" text-anchor="middle" font-weight="normal" >120</text>
<text x="1131.3" y="523" font-size="7.5" fill="#575757" text-anchor="middle" font-weight="normal" >144</text>
<text x="1186.6" y="523" font-size="7.5" fill="#575757" text-anchor="middle" font-weight="normal" >168</text>
<text x="1241.9" y="523" font-size="7.5" fill="#575757" text-anchor="middle" font-weight="normal" >192</text>
<text x="1297.2" y="523" font-size="7.5" fill="#575757" text-anchor="middle" font-weight="normal" >216</text>
<text x="1352.5" y="523" font-size="7.5" fill="#575757" text-anchor="middle" font-weight="normal" >240</text>
<rect x="1401" y="525" width="247" height="40" rx="0" fill="#1d1d1d" />
<rect x="778" y="525.5" width="871" height="14.5" rx="0" fill="#131313" />
<text x="782" y="536" font-size="7" fill="#444" text-anchor="start" font-weight="normal" >Snap</text>
<text x="1490" y="536" font-size="7" fill="#3c3c3c" text-anchor="start" font-weight="normal" >BézierCurve | Verts 0/5 | Objects 1/4</text>
<defs><linearGradient id="ctl" x1="0" y1="0" x2="0" y2="1"><stop offset="0" stop-color="#000" stop-opacity="0"/><stop offset="1" stop-color="#000" stop-opacity="0.55"/></linearGradient></defs>
<rect x="778" y="527" width="871" height="38" rx="0" fill="url(#ctl)" />
<rect x="778" y="565" width="871" height="34" rx="0" fill="#000000" />
<circle cx="1213" cy="321" r="26" fill="#f7b11c"/><path d="M1203.5 308.5L1226.5 321L1203.5 333.5Z" fill="#fff" stroke="#fff" stroke-width="2" stroke-linejoin="round"/>
<rect x="789" y="520" width="35" height="35" rx="4" fill="#fdb515" />
<path d="M799 527.5L817 537.5L799 547.5Z" fill="#fff"/>
<rect x="836" y="535.5" width="529" height="5" rx="2.5" fill="#555555" />
<circle cx="836.5" cy="537.5" r="7.5" fill="#ffffff"/>
<text x="1390.5" y="542" font-size="14" fill="#ffffff" text-anchor="middle" font-weight="normal" stroke="#fff" stroke-width="0.35">20:37</text>
<rect x="1417" y="520" width="35" height="35" rx="4" fill="#fdb515" />
<path d="M1425 533h3.5l5-4.5v18l-5-4.5h-3.5z" fill="#fff"/><path d="M1437 533.5a6 6 0 0 1 0 8M1440 530.5a10 10 0 0 1 0 14" stroke="#fff" stroke-width="1.8" fill="none" stroke-linecap="round"/>
<rect x="1458" y="535.5" width="99" height="5" rx="2.5" fill="#555555" />
<rect x="1458" y="535.5" width="62" height="5" rx="2.5" fill="#fdb515" />
<circle cx="1520" cy="537.5" r="7" fill="#ffffff"/>
<rect x="1565" y="520" width="35" height="35" rx="4" fill="#fdb515" />
<g transform="translate(1582.5,537.5)" fill="#fff"><circle r="6"/><rect x="-2" y="-9" width="4" height="5" transform="rotate(0)"/><rect x="-2" y="-9" width="4" height="5" transform="rotate(45)"/><rect x="-2" y="-9" width="4" height="5" transform="rotate(90)"/><rect x="-2" y="-9" width="4" height="5" transform="rotate(135)"/><rect x="-2" y="-9" width="4" height="5" transform="rotate(180)"/><rect x="-2" y="-9" width="4" height="5" transform="rotate(225)"/><rect x="-2" y="-9" width="4" height="5" transform="rotate(270)"/><rect x="-2" y="-9" width="4" height="5" transform="rotate(315)"/><circle r="2.6" fill="#fdb515"/></g>
<rect x="1603" y="520" width="35" height="35" rx="4" fill="#fdb515" />
<g stroke="#fff" stroke-width="1.8" fill="none" stroke-linecap="round"><path d="M1623 531.5h6v6M1629 531.5l-6 6M1612 543.5v6h6M1612 549.5l6-6"/></g></svg></div><!--video-->
  <h1>Forgástestek / Screw módosító</h1>
  <div class="b">Ha nem megfelelő a videó minősége, várd meg amíg betöltődik, vagy ellenőrizd az internet kapcsolatodat!</div>
  <div class="p">A forgástest olyan háromdimenziós geometriai test, amely egy síkbeli görbe vagy profil egy egyenes – azaz forgástengely – körüli elforgatásával jön létre. Ha például egy egyenes szakaszt forgatunk el, henger keletkezik; ha egy ívelt profilt, akkor annak megfelelő, térfogattal rendelkező test jön létre. A módszer lényege, hogy elegendő a tárgy metszeti profilját megrajzolni, a teljes térbeli forma a forgatás eredményeként áll elő.</div>
  <div class="sep"></div>
  <svg style="position:absolute;left:782px;top:883px" width="7" height="11" viewBox="0 0 7 11"><path d="M6 0.5L0.5 5.5L6 10.5Z" fill="#999"/></svg><div class="prev">Előző</div>
  <div class="next">Következő</div><svg style="position:absolute;left:1646px;top:883px" width="7" height="11" viewBox="0 0 7 11"><path d="M1 0.5L6.5 5.5L1 10.5Z" fill="#999"/></svg>
</div>
<div id="cookie"><svg style="position:absolute;left:0;top:0" width="49" height="49" viewBox="0 0 49 49"><path d="M24.5 12.5A12 12 0 1 0 36.3 22.6A3.6 3.6 0 0 1 32.2 18.8A3.6 3.6 0 0 1 28.4 14.5A3.2 3.2 0 0 1 24.5 12.5Z" fill="#fff"/><circle cx="23" cy="21.5" r="1.9" fill="none" stroke="#3d3f52" stroke-width="1.6"/><circle cx="28.5" cy="26.5" r="1.9" fill="none" stroke="#3d3f52" stroke-width="1.6"/><circle cx="20.5" cy="28.5" r="1.9" fill="none" stroke="#3d3f52" stroke-width="1.6"/></svg></div>
</body></html>
